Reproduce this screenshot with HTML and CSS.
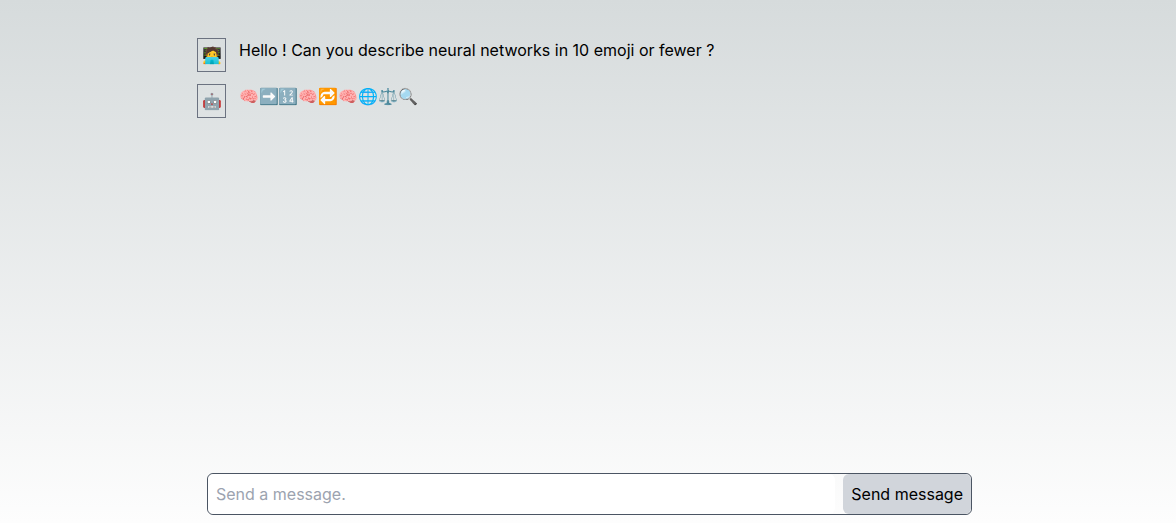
FILE: index.html
```
<!DOCTYPE html>
<html lang="en">
<head>
<meta charset="utf-8">
<meta name="viewport" content="width=device-width, initial-scale=1">
<title>Chat</title>
<link rel="stylesheet" href="styles.css">
</head>
<body class="page">
<main class="chat">
<section class="messages">
<article class="message"><span class="avatar">🧑‍💻</span><p class="text">Hello ! Can you describe neural networks in 10 emoji or fewer ?</p></article>
<article class="message"><span class="avatar">🤖</span><p class="text">🧠➡️🔢🧠🔁🧠🌐⚖️🔍</p></article>
</section>
<form class="composer">
<input class="field" type="text" aria-label="Message" placeholder="Send a message.">
<button class="send" type="button">Send message</button>
</form>
</main>
</body>
</html>
```
FILE: styles.css
```
* { box-sizing: border-box; }
.page { margin: 0; background: linear-gradient(to bottom, rgb(214, 219, 220), #fdfdfd); font: 16px/24px Inter, "Noto Color Emoji", sans-serif; color: #000; }
.chat { width: calc(200% / 3); min-height: 100vh; margin: 0 auto; padding: 38px 8px 8px 1px; display: flex; flex-direction: column; }
.messages { flex: 1; display: flex; flex-direction: column; gap: 12px; }
.message { display: flex; gap: 13px; }
.avatar { flex: none; width: 29px; height: 34px; padding: 4px; border: 1px solid #6b7280; }
.text { margin: 0; }
.composer { display: flex; gap: 8px; margin-left: 10px; border: 1px solid #4b5563; border-radius: 6px; }
.field { flex: 1; min-width: 0; border: 0; border-radius: 6px; padding: 8px; font: inherit; background: #fff; }
.field::placeholder { color: #9ca3af; }
.send { border: 0; border-radius: 6px; padding: 8px; font: inherit; color: #000; background: #d1d5db; }
```
